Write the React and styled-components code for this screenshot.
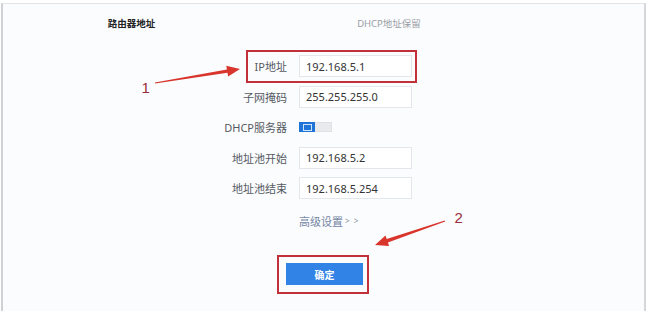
import React from 'react';
import styled, { createGlobalStyle } from 'styled-components';

const Global = createGlobalStyle`
  html, body { margin: 0; padding: 0; background: #fff; }
  body { font-family: "Noto Sans", "Noto Sans CJK SC", sans-serif; }
  * { box-sizing: border-box; }
`;

const Page = styled.div`
  position: relative;
  width: 650px;
  height: 311px;
  overflow: hidden;
  padding: 3px 0 0 1px;
`;

const Frame = styled.div`
  width: 645px;
  height: 308px;
  border-left: 2px solid #d0d1d5;
  border-right: 2px solid #d6d7da;
  border-top: 1px solid #e3e4e7;
  background: #fbfcfe;
  display: flex;
  flex-direction: column;
`;

const Tabs = styled.div`
  display: grid;
  grid-template-columns: 257px 258px;
  height: 37px;
  align-items: center;
`;

const Tab = styled.div`
  text-align: center;
  font-size: 9.5px;
  color: ${p => (p.$active ? '#222' : '#9a9ea6')};
  font-weight: ${p => (p.$active ? 600 : 400)};
`;

const Form = styled.div`
  display: flex;
  flex-direction: column;
  gap: 8.5px;
  padding-top: 14px;
`;

const Row = styled.div`
  position: relative;
  display: grid;
  grid-template-columns: 284px 113px;
  column-gap: 12px;
  align-items: center;
  width: 409px;
  height: 22px;
  margin-top: ${p => p.$mt || 0}px;
  &::after {
    content: '';
    display: ${p => (p.$highlight ? 'block' : 'none')};
    position: absolute;
    left: 243px;
    right: -4.5px;
    top: -5px;
    bottom: -6px;
    border: 2.5px solid #c2303a;
    pointer-events: none;
  }
`;

const Label = styled.div`
  text-align: right;
  font-size: 11px;
  color: #555a62;
`;

const Field = styled.input`
  height: 22px;
  width: 113px;
  border: 1px solid #e3e6eb;
  background: #fff;
  font-family: inherit;
  font-size: 11px;
  color: #333;
  padding: 0 0 0 6px;
  outline: none;
`;

const Switch = styled.div`
  position: relative;
  width: 33px;
  height: 10px;
  background: #e9eaec;
  border: 1px solid #dfe1e4;
`;

const Knob = styled.div`
  position: absolute;
  left: -1px;
  top: -1px;
  width: 16px;
  height: 10px;
  background: #1f74d8;
  display: flex;
  align-items: center;
  justify-content: center;
  &::before {
    content: '';
    width: 7px;
    height: 5px;
    border: 1px solid #cfe2fb;
  }
`;

const Link = styled.div`
  font-size: 11px;
  color: #7486a3;
  display: flex;
  align-items: center;
  gap: 2px;
`;

const Chevrons = styled.span`
  font-size: 8px;
  color: #8a9099;
  letter-spacing: 1px;
`;

const ButtonWrap = styled.div`
  position: relative;
  margin: 31.5px 0 0 283px;
  width: 77px;
  &::after {
    content: '';
    position: absolute;
    left: -9.5px;
    right: -6px;
    top: -8.5px;
    bottom: -9px;
    border: 2.5px solid #c2303a;
    pointer-events: none;
  }
`;

const Button = styled.button`
  display: block;
  width: 77px;
  height: 22px;
  border: none;
  background: #3283e6;
  color: #fff;
  font-family: inherit;
  font-size: 10px;
  font-weight: 600;
  padding: 0;
`;

const Overlay = styled.svg`
  position: absolute;
  left: 0;
  top: 0;
  pointer-events: none;
`;

const Num = styled.span`
  position: absolute;
  left: ${p => p.$x}px;
  top: ${p => p.$y}px;
  font-family: "Liberation Sans", sans-serif;
  font-size: 15px;
  line-height: 15px;
  color: #9a2d3a;
`;

const fields = [
  { label: '子网掩码', value: '255.255.255.0' },
];

const pool = [
  { label: '地址池开始', value: '192.168.5.2' },
  { label: '地址池结束', value: '192.168.5.254' },
];

export default function App() {
  return (
    <Page>
      <Global />
      <Frame>
        <Tabs>
          <Tab $active>路由器地址</Tab>
          <Tab>DHCP地址保留</Tab>
        </Tabs>
        <Form>
          <Row $highlight>
            <Label>IP地址</Label>
            <Field readOnly defaultValue="192.168.5.1" />
          </Row>
          {fields.map(r => (
            <Row key={r.label}>
              <Label>{r.label}</Label>
              <Field readOnly defaultValue={r.value} />
            </Row>
          ))}
          <Row>
            <Label>DHCP服务器</Label>
            <Switch>
              <Knob />
            </Switch>
          </Row>
          {pool.map(r => (
            <Row key={r.label}>
              <Label>{r.label}</Label>
              <Field readOnly defaultValue={r.value} />
            </Row>
          ))}
          <Row $mt={2}>
            <span />
            <Link>
              高级设置<Chevrons>&gt; &gt;</Chevrons>
            </Link>
          </Row>
        </Form>
        <ButtonWrap>
          <Button>确定</Button>
        </ButtonWrap>
      </Frame>
      <Overlay width="650" height="311" viewBox="0 0 650 311">
        <polygon
          fill="#d8352c"
          points="155.1,83.5 227.5,72.8 228.1,76.5 240,69 226.3,65.7 226.9,69.4 154.9,82.5"
        />
        <polygon
          fill="#d8352c"
          points="445.2,221.5 387.9,242.5 389.1,246.0 375,245 385.5,235.6 386.7,239.1 444.8,220.5"
        />
      </Overlay>
      <Num $x={141.5} $y={80}>1</Num>
      <Num $x={454.5} $y={210}>2</Num>
    </Page>
  );
}
